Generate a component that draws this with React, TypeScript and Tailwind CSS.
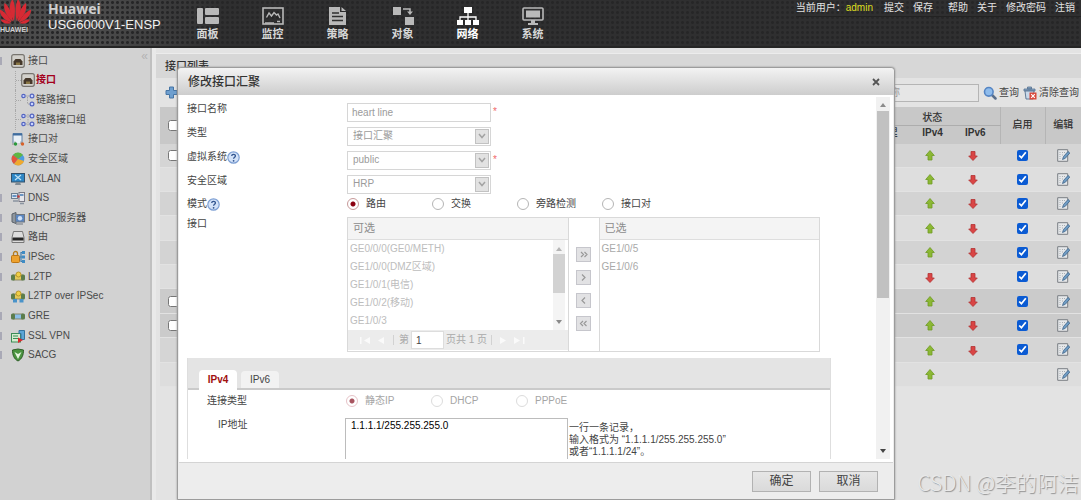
import { useState } from 'react';
import type { ReactNode } from 'react';

type NavItem = { id: string; label: string; icon: ReactNode };
type TreeItem = { label: string; icon: ReactNode; expandable?: boolean };
type PortRow = { bg: string; v4: 'up' | 'down'; v6?: 'up' | 'down'; enable: boolean; selectable: boolean };

// ---------- top menu icons ----------
const navItems: NavItem[] = [
    {
        id: 'panel', label: '面板', icon: (
            <svg viewBox="0 0 22 18" className="w-[22px] h-[18px]" fill="currentColor">
                <rect x="0" y="1" width="6" height="16" rx="1" />
                <rect x="8" y="1" width="14" height="7" rx="1" />
                <rect x="8" y="10" width="14" height="7" rx="1" />
            </svg>
        )
    },
    {
        id: 'monitor', label: '监控', icon: (
            <svg viewBox="0 0 22 18" className="w-[22px] h-[18px]" fill="none" stroke="currentColor">
                <rect x="1" y="1" width="20" height="16" strokeWidth="1.6" />
                <path d="M4.500 10.500 7 6l2.500 3L12 5.500 14.500 8l1.500-1 2 4" strokeWidth="1.400" />
                <path d="M3 16h9M15 14.500h3" strokeWidth="1.400" />
            </svg>
        )
    },
    {
        id: 'policy', label: '策略', icon: (
            <svg viewBox="0 0 22 18" className="w-[22px] h-[18px]">
                <path d="M2 0h11v5h6v13H2z" fill="currentColor" />
                <path d="M14.500 0 19 4h-4.500z" fill="currentColor" />
                <path d="M5 6h7M5 9.500h11M5 13.500h11" stroke="#303030" strokeWidth="1.300" />
            </svg>
        )
    },
    {
        id: 'object', label: '对象', icon: (
            <svg viewBox="0 0 22 18" className="w-[22px] h-[18px]" fill="currentColor">
                <rect x="1" y="0" width="8" height="8" />
                <rect x="13" y="10" width="9" height="8" />
                <path d="M11 2h7v3" fill="none" stroke="currentColor" strokeWidth="1.500" />
                <path d="M15 4.500h6L18 8z" />
            </svg>
        )
    },
    {
        id: 'network', label: '网络', icon: (
            <svg viewBox="0 0 22 18" className="w-[22px] h-[18px]" fill="currentColor">
                <rect x="7" y="0" width="8" height="6" />
                <path d="M11 6v8M3 14v-4h16v4" fill="none" stroke="currentColor" strokeWidth="1.300" />
                <rect x="0" y="13" width="6" height="5" />
                <rect x="8" y="13" width="6" height="5" />
                <rect x="16" y="13" width="6" height="5" />
            </svg>
        )
    },
    {
        id: 'system', label: '系统', icon: (
            <svg viewBox="0 0 22 18" className="w-[22px] h-[18px]" fill="currentColor">
                <rect x="1" y="1" width="20" height="12" rx="1" fill="none" stroke="currentColor" strokeWidth="1.600" />
                <rect x="4" y="3.500" width="14" height="7" />
                <path d="M9 13h4v3h3v2H6v-2h3z" />
            </svg>
        )
    },
];

// ---------- tree icons ----------
const svgCls = 'w-3.5 h-3.5 shrink-0';

const PortIcon = () => (
    <svg viewBox="0 0 14 14" className={svgCls}>
        <rect x="0.700" y="0.700" width="12.600" height="12.600" rx="2" fill="#d2d0cb" stroke="#77746f" strokeWidth="1.200" />
        <path d="M2.500 11V7.500L4.500 5h5l2 2.500V11z" fill="#45382b" />
        <path d="M5 11V8.500h4V11z" fill="#8a7745" />
    </svg>
);

const LinkIcon = ({ group }: { group?: boolean }) => (
    <svg viewBox="0 0 14 14" className={svgCls}>
        <path d={group ? 'M2.500 3h8M2.500 11h8M7 1v12' : 'M2.500 3h4v8h4M6.500 3h4'} stroke="#a5a5a5" strokeDasharray="1.500 1" fill="none" />
        <g fill="#c9d3ff" stroke="#5365c0" strokeWidth="1.200">
            <circle cx="2.500" cy="3" r="1.700" />
            {group && <circle cx="2.500" cy="11" r="1.700" />}
            <circle cx="11" cy="3" r="1.900" />
            <circle cx="11" cy="11" r="1.900" />
        </g>
    </svg>
);

const PairIcon = () => (
    <svg viewBox="0 0 14 14" className={svgCls}>
        <path d="M2 11V1.500h9V11" fill="#e9f0f6" stroke="#5e81a8" />
        <path d="M2 2.500h9" stroke="#3f6c9f" strokeWidth="2" />
        <path d="M4 9.500v2.500H1M10 9.500V12h3" fill="none" stroke="#8a8a8a" />
        <circle cx="4.500" cy="12" r="1.700" fill="#2a9a3c" />
        <circle cx="11.500" cy="12" r="1.700" fill="#d8622b" />
    </svg>
);

const ZoneIcon = () => (
    <svg viewBox="0 0 14 14" className={svgCls}>
        <circle cx="7" cy="7" r="6.300" fill="#4c9be0" />
        <path d="M7 7 2 3A6.300 6.300 0 0 1 12 3z" fill="#5fb645" />
        <path d="M7 7 2 3a6.300 6.300 0 0 0 1 9z" fill="#e2553d" />
        <path d="M7 7 3 12a6.300 6.300 0 0 0 10-3z" fill="#f0a92e" />
    </svg>
);

const VxlanIcon = () => (
    <svg viewBox="0 0 14 14" className={svgCls}>
        <rect x="0.500" y="1.500" width="13" height="8.500" fill="#2e86c4" stroke="#33516b" />
        <path d="m4 3 6 5M10 3 4 8" stroke="#bfe3f7" strokeWidth="1.200" />
        <path d="M5 10h4l1 3H4z" fill="#7f8b94" />
    </svg>
);

const DnsIcon = () => (
    <svg viewBox="0 0 14 14" className={svgCls}>
        <rect x="0.500" y="2.500" width="6" height="5" fill="#dbe6f0" stroke="#6c7e90" />
        <rect x="8" y="1.500" width="5.500" height="9" fill="#e5e5ea" stroke="#7a7a86" />
        <path d="M1.500 5h4M9 4h3.500" stroke="#4179b4" strokeWidth="1.300" />
        <circle cx="7.500" cy="5.500" r="1.200" fill="#c43b3b" />
        <path d="M2 10h5M9 12.500h4" stroke="#8a94a0" strokeWidth="1.400" />
    </svg>
);

const DhcpIcon = () => (
    <svg viewBox="0 0 14 14" className={svgCls}>
        <path d="M1 3l4-1.500v11L1 11z" fill="#8e969e" stroke="#5b636b" />
        <rect x="4.500" y="3.500" width="9" height="7.500" fill="#5b86c0" stroke="#6f7780" />
        <circle cx="9" cy="7.200" r="2.200" fill="#cfe1f7" />
        <path d="M5 13h7" stroke="#6f7780" />
    </svg>
);

const RouteIcon = () => (
    <svg viewBox="0 0 14 14" className={svgCls}>
        <path d="M2.500 1.500h9l1.500 6V12.500H1v-5z" fill="#dcdcdc" stroke="#777" />
        <rect x="1.500" y="7.500" width="11" height="3" fill="#262626" />
    </svg>
);

const IpsecIcon = () => (
    <svg viewBox="0 0 14 14" className={svgCls}>
        <path d="M2.500 6V3.500a2 2 0 0 1 4 0V6" fill="none" stroke="#b77d1d" strokeWidth="1.300" />
        <rect x="0.500" y="5.500" width="8" height="7" rx="1" fill="#eda12d" stroke="#bb7515" />
        <path d="M13 2.500h-3v9h3M8.500 7H13" fill="none" stroke="#3f7fb0" strokeWidth="1.200" />
        <path d="M11 1h3v3h-3zM11 5.500h3v3h-3zM11 10h3v3h-3z" fill="#3f8cc4" />
    </svg>
);

const TunnelIcon = ({ mid, base }: { mid: string; base?: boolean }) => (
    <svg viewBox="0 0 14 14" className={svgCls}>
        <rect x="2.500" y="5" width="9" height="5" fill={mid} stroke="#7d7a52" strokeWidth="0.800" />
        <rect x="0" y="4.500" width="4" height="6" rx="1.500" fill="#5c7d4c" />
        <rect x="10" y="4.500" width="4" height="6" rx="1.500" fill="#5c7d4c" />
        {mid !== '#8dbfe8' && <circle cx="7.500" cy="4.500" r="2.500" fill="#f0cf45" stroke="#b8962a" />}
        {base && <path d="M2 10h4v3.500H2zM8.500 10h4v3.500h-4z" fill="#4a93c9" />}
    </svg>
);

const SslIcon = () => (
    <svg viewBox="0 0 14 14" className={svgCls}>
        <rect x="0.500" y="4.500" width="9" height="8.500" fill="#d5ecd0" stroke="#3b8d56" />
        <path d="M2 7h5M2 9.500h5" stroke="#3b8d56" strokeWidth="1.200" />
        <path d="M8 1.500h5.500v9H10V4.500H8z" fill="#5ba6d6" stroke="#34749f" />
        <path d="m7 8.500 5 2.500-5 3z" fill="#d8282c" />
    </svg>
);

const SacgIcon = () => (
    <svg viewBox="0 0 14 14" className={svgCls}>
        <path d="M1.500 2 7 1l5.500 1c0 5-1.500 9-5.500 11C3 11 1.500 7 1.500 2z" fill="#4b9440" stroke="#2f5f28" />
        <path d="m3.500 4 3.500 7 3.500-7-3.500 2z" fill="#e6f5df" />
    </svg>
);

const childItems: TreeItem[] = [
    { label: '接口', icon: <PortIcon /> },
    { label: '链路接口', icon: <LinkIcon /> },
    { label: '链路接口组', icon: <LinkIcon group /> },
];

const treeItems: TreeItem[] = [
    { label: '接口对', icon: <PairIcon /> },
    { label: '安全区域', icon: <ZoneIcon /> },
    { label: 'VXLAN', icon: <VxlanIcon /> },
    { label: 'DNS', icon: <DnsIcon />, expandable: true },
    { label: 'DHCP服务器', icon: <DhcpIcon />, expandable: true },
    { label: '路由', icon: <RouteIcon />, expandable: true },
    { label: 'IPSec', icon: <IpsecIcon />, expandable: true },
    { label: 'L2TP', icon: <TunnelIcon mid="#e3c95a" />, expandable: true },
    { label: 'L2TP over IPSec', icon: <TunnelIcon mid="#e3c95a" base /> },
    { label: 'GRE', icon: <TunnelIcon mid="#8dbfe8" />, expandable: true },
    { label: 'SSL VPN', icon: <SslIcon />, expandable: true },
    { label: 'SACG', icon: <SacgIcon />, expandable: true },
];

const portRows: PortRow[] = [
    { bg: 'bg-[#d5d5d5]', v4: 'up', v6: 'down', enable: true, selectable: true },
    { bg: 'bg-[#dedede]', v4: 'up', v6: 'down', enable: true, selectable: false },
    { bg: 'bg-[#d3d3d3]', v4: 'up', v6: 'down', enable: true, selectable: false },
    { bg: 'bg-[#dddddd]', v4: 'up', v6: 'down', enable: true, selectable: false },
    { bg: 'bg-[#d3d3d3]', v4: 'up', v6: 'down', enable: true, selectable: false },
    { bg: 'bg-[#dddddd]', v4: 'down', v6: 'down', enable: true, selectable: false },
    { bg: 'bg-[#cbcbcb]', v4: 'up', v6: 'down', enable: true, selectable: true },
    { bg: 'bg-[#cbcbcb]', v4: 'up', v6: 'down', enable: true, selectable: true },
    { bg: 'bg-[#d5d5d5]', v4: 'up', v6: 'down', enable: true, selectable: false },
    { bg: 'bg-[#dddddd]', v4: 'up', enable: false, selectable: false },
];

const freePorts = ['GE0/0/0(GE0/METH)', 'GE1/0/0(DMZ区域)', 'GE1/0/1(电信)', 'GE1/0/2(移动)', 'GE1/0/3'];
const usedPorts = ['GE1/0/5', 'GE1/0/6'];

// ---------- small shared pieces ----------
function Arrow({ dir }: { dir: 'up' | 'down' }) {
    return (
        <svg viewBox="0 0 10 11" className="inline-block w-2.5 h-[11px] align-middle">
            {dir === 'up'
                ? <path d="M5 .5 9.300 5.500H7V10H3V5.500H.7z" fill="#8cb834" stroke="#6f9a25" strokeWidth="0.800" />
                : <path d="M5 10.500.7 6H3V1.500h4V6h2.300z" fill="#d94545" stroke="#b23333" strokeWidth="0.800" />}
        </svg>
    );
}

const EditIcon = () => (
    <svg viewBox="0 0 13 13" className="inline-block w-[13px] h-[13px] align-middle">
        <path d="M.7.7h10v11.600H.7z" fill="#e6e8ea" stroke="#7b7f84" />
        <path d="M3 3v7M5 3.500h4M5 6h2" stroke="#a9aeb3" strokeDasharray="1 1" />
        <path d="m5.500 10.500 1-3L11 2.500l1.800 1.500-4.500 5.300z" fill="#6f9cc4" stroke="#41668a" strokeWidth="0.800" />
    </svg>
);

const HelpIcon = () => (
    <svg viewBox="0 0 13 13" className="w-[13px] h-[13px]">
        <circle cx="6.500" cy="6.500" r="5.700" fill="#d3e2f8" stroke="#7d9fd3" strokeWidth="1.200" />
        <path d="M4.700 5c.1-2.300 3.800-2.100 3.700 0 0 1.300-1.800 1.200-1.800 2.800" fill="none" stroke="#31548f" strokeWidth="1.300" />
        <circle cx="6.600" cy="9.800" r="0.900" fill="#31548f" />
    </svg>
);

const Triangle = ({ down, color }: { down?: boolean; color: string }) => (
    <svg viewBox="0 0 6 4" className="w-1.5 h-1"><path d={down ? 'M0 0h6L3 4z' : 'M0 4h6L3 0z'} fill={color} /></svg>
);

function Radio({ name, label, checked, disabled }: { name: string; label: string; checked?: boolean; disabled?: boolean }) {
    return (
        <label className={`flex w-[85px] items-center gap-[7px] ${disabled ? 'text-[#a5a5a5]' : ''}`}>
            <input
                type="radio"
                name={name}
                defaultChecked={checked}
                disabled={disabled}
                className="m-0 h-3 w-3 appearance-none rounded-full border border-[#b5b5b5] bg-white checked:border-[#c79a9a] checked:bg-[radial-gradient(circle,#8b0010_0_2px,white_3px)] disabled:border-[#dcdcdc] disabled:checked:border-[#e6c3c8] disabled:checked:bg-[radial-gradient(circle,#a85560_0_2px,white_3px)]"
            />
            {label}
        </label>
    );
}

function SelectRow({ id, label, value, help, required }: { id: string; label: string; value: string; help?: boolean; required?: boolean }) {
    return (
        <div className="flex h-6 items-center">
            <div className="flex w-40 items-center self-start">
                <label htmlFor={id} className="leading-[18px]">{label}</label>
                {help && <HelpIcon />}
            </div>
            <div className="relative w-36">
                <select id={id} disabled className="h-[19px] w-full appearance-none border border-[#d6d6d6] bg-white pl-[5px] leading-4 text-[#9b9b9b] opacity-100">
                    <option>{value}</option>
                </select>
                <span className="pointer-events-none absolute right-0.5 top-0.5 flex h-[15px] w-3.5 items-center justify-center border border-[#c2c2c2] bg-[#e2e2e2]">
                    <svg viewBox="0 0 8 6" className="w-2 h-1.5"><path d="m1 1 3 3.500L7 1" fill="none" stroke="#a3a3a3" strokeWidth="1.500" /></svg>
                </span>
            </div>
            {required && <span className="pl-0.5 text-[#f06a6a]">*</span>}
        </div>
    );
}

function Header() {
    return (
        <header className="flex h-12 shrink-0 overflow-hidden border-b-2 border-[#252525] bg-[#2f2f30] bg-[radial-gradient(circle,#262627_1px,transparent_2px),linear-gradient(90deg,#484848_0,#505050_80px,#2f2f30_220px)] bg-size-[5px_5px,100%_100%]">
            <div className="w-12 shrink-0">
                <svg viewBox="0 0 34 25" className="block h-[25px] w-[34px]">
                    <g fill="#d62a34">
                        <path d="M14 21C9.500 14 8 5 12.500-1c2.800 5 3 13 1.500 22z" />
                        <path d="M16.500 21C15 13 15.200 4 18-1c4.500 6 3 15-1.500 22z" />
                        <path d="M12.800 21.500C7 17 3 10 4.500 3c4.500 3 8 11 8.300 18.500z" />
                        <path d="M17.800 21.500C18 14 21.500 6 26 3c1.500 7-2.500 14-8.200 18.500z" />
                        <path d="M11.500 22.200C5.500 21-.5 16-.2 9.500c4.700 2 9.200 7 11.700 12.700z" />
                        <path d="M19 22.200C21.500 16.500 26 11.500 31 9.500 31.300 16 25 21 19 22.200z" />
                        <path d="M11 23.200c-4 1.200-8.500.3-10.500-3.700 3.500-.2 7.500 1 10.500 3.700z" />
                        <path d="M19.500 23.200c4 1.200 8.500.3 10.500-3.700-3.500-.2-7.500 1-10.500 3.700z" />
                    </g>
                </svg>
                <p className="text-[7px] leading-[10px] font-bold text-[#d0d0d0]">HUAWEI</p>
            </div>
            <div className="w-[136px] shrink-0 whitespace-nowrap">
                <p className="font-['Noto_Sans'] text-[14px] leading-[17px] font-bold text-[#cfcfcf]">Huawei</p>
                <p className="text-[13px] leading-4 text-[#f0f0f0]">USG6000V1-ENSP</p>
            </div>
            <nav className="flex">
                {navItems.map((item) => (
                    <a key={item.id} href={`#${item.id}`} className={`flex w-[65px] flex-col items-center pt-[7px] pr-[18px] text-[11px] leading-[19px] font-bold ${item.id === 'network' ? 'text-white' : 'text-[#b9b9b9]'}`}>
                        {item.icon}
                        <span className={item.id === 'network' ? 'text-white' : 'text-[#d6d6d6]'}>{item.label}</span>
                    </a>
                ))}
            </nav>
            <div className="ml-auto flex h-[17px] items-center gap-[9px] self-start border-b border-[#222] pr-1.5 leading-[14px] whitespace-nowrap text-[#e2e2e2]">
                <span className="pr-0.5">当前用户：<span className="text-[#dede20]">admin</span></span>
                <a href="#commit">提交</a>
                <a href="#save">保存</a>
                <a href="#help" className="pl-1.5">帮助</a>
                <a href="#about">关于</a>
                <a href="#password">修改密码</a>
                <a href="#logout">注销</a>
            </div>
        </header>
    );
}

function Sidebar() {
    return (
        <aside className="flex w-[152px] shrink-0 items-start border-r-2 border-[#c0c0c0] bg-[#d2d2d2] text-[#4a4a4a]">
            {/* rows share the height so the whole tree keeps one rhythm */}
            <ul className="grid h-[317px] flex-1 auto-rows-fr pt-[3px] whitespace-nowrap">
                <li className="flex items-center">
                    <span className="mr-[9px] h-2 w-0.5 bg-[#a9a9b6]" />
                    <PortIcon />
                    <a href="#interface" className="pl-[3px]">接口</a>
                </li>
                {childItems.map((item, i) => (
                    <li key={item.label} className="ml-[15px] flex items-center border-l border-dotted border-[#a8a8a8]">
                        <span className="w-[5px] border-t border-dotted border-[#a8a8a8]" />
                        {item.icon}
                        <a href={`#tree-${i}`} className={i === 0 ? 'pl-px font-bold text-[#a3001c]' : 'pl-px'}>{item.label}</a>
                    </li>
                ))}
                {treeItems.map((item) => (
                    <li key={item.label} className="flex items-center">
                        <span className={`mr-[9px] h-2 w-0.5 ${item.expandable ? 'bg-[#a9a9b6]' : ''}`} />
                        {item.icon}
                        <a href={`#${item.label}`} className="pl-[3px]">{item.label}</a>
                    </li>
                ))}
            </ul>
            <button className="pr-0.5 text-[12px] leading-4 text-[#b3b3b3]" aria-label="collapse">«</button>
        </aside>
    );
}

function PortList() {
    return (
        <main className="flex-1 border-l-4 border-[#e9e9e9] bg-[#e3e3e3] pt-[5px]">
            <section className="border-t border-[#ececec]">
                <h2 className="bg-[#d7d7d7] pl-[9px] text-[11px] leading-6 font-medium text-[#333]">接口列表</h2>
                <div className="flex h-[29px] items-center gap-1 pr-0.5 pl-[9px] text-[#444]">
                    <button aria-label="add">
                        <svg viewBox="0 0 13 13" className="h-[13px] w-[13px]"><path d="M4.500 1h4v3.500H12v4H8.500V12h-4V8.500H1v-4h3.500z" fill="#6e9fcf" stroke="#4675a5" /></svg>
                    </button>
                    <input aria-label="search" placeholder="请输入接口名称" className="ml-auto h-[18px] w-[151px] border border-[#b5b5b5] bg-[#e6e6e6] pl-px placeholder:text-[#999]" />
                    <button className="flex items-center gap-0.5">
                        <svg viewBox="0 0 14 14" className="h-3.5 w-3.5">
                            <path d="m9 9 3.500 3.500" stroke="#5b6f8a" strokeWidth="2.500" strokeLinecap="round" />
                            <circle cx="5.800" cy="5.800" r="4.300" fill="#8fbcec" stroke="#5585c4" strokeWidth="1.600" />
                        </svg>
                        查询
                    </button>
                    <button className="flex items-center gap-0.5">
                        <svg viewBox="0 0 14 14" className="h-3.5 w-3.5">
                            <path d="M1 3h11v2H1zM4.500 1h4v2h-4z" fill="#8ba9c9" stroke="#56718f" strokeWidth="0.800" />
                            <path d="M2 5h9l-1 8H3z" fill="#c9d9ea" stroke="#56718f" strokeWidth="0.900" />
                            <rect x="6.500" y="6.500" width="7" height="7" fill="#d9483b" />
                            <path d="m8.200 8.200 3.600 3.600m0-3.600-3.600 3.600" stroke="#fff" strokeWidth="1.200" />
                        </svg>
                        清除查询
                    </button>
                </div>
                <div className="pl-1">
                    <table className="h-[280px] w-full table-fixed border-collapse text-center text-[#333]">
                        <colgroup>
                            <col className="w-6" />
                            <col />
                            <col className="w-[45px]" />
                            <col className="w-[45px]" />
                            <col className="w-[45px]" />
                            <col className="w-[45px]" />
                            <col className="w-9" />
                        </colgroup>
                        <thead className="bg-[#c8c8c8]">
                            <tr className="h-[18px]">
                                <th rowSpan={2}><input type="checkbox" aria-label="select all" className="ml-2 block h-[11px] w-[11px]" /></th>
                                <th rowSpan={2}></th>
                                <th colSpan={3} className="border-b border-[#adadad] pt-1 font-medium">状态</th>
                                <th rowSpan={2} className="border-x border-[#b5b5b5] font-medium">启用</th>
                                <th rowSpan={2} className="font-medium">编辑</th>
                            </tr>
                            <tr className="h-[18px] align-top leading-[14px]">
                                <th className="font-medium">物理</th>
                                <th>IPv4</th>
                                <th className="pr-1">IPv6</th>
                            </tr>
                        </thead>
                        <tbody>
                            {portRows.map((row, i) => (
                                <tr key={i} className={`border-b border-[#e2e2e2] ${row.bg}`}>
                                    <td>{row.selectable && <input type="checkbox" aria-label={`row ${i + 1}`} className="ml-2 block h-[11px] w-[11px]" />}</td>
                                    <td></td>
                                    <td></td>
                                    <td className="pr-1"><Arrow dir={row.v4} /></td>
                                    <td className="pr-2">{row.v6 && <Arrow dir={row.v6} />}</td>
                                    <td>{row.enable && <input type="checkbox" defaultChecked aria-label={`enable ${i + 1}`} className="mx-auto block h-[11px] w-[11px] accent-[#0b5bd3]" />}</td>
                                    <td><button aria-label={`edit ${i + 1}`} className="block w-full leading-3"><EditIcon /></button></td>
                                </tr>
                            ))}
                        </tbody>
                    </table>
                </div>
            </section>
        </main>
    );
}

function PortPicker() {
    return (
        <div className="flex h-[135px] flex-1 border border-[#d9d9d9] text-[#a9a9a9]">
            <div className="flex flex-1 flex-col border-r border-[#d9d9d9]">
                <h3 className="border-b border-[#dedede] bg-[#f4f4f4] pl-[5px] text-[11px] leading-[21px] text-[#8c8c8c]">可选</h3>
                <div className="flex h-[90px]">
                    <ul className="flex-1 pl-0.5 leading-[18px] text-[#bdbdbd]">
                        {freePorts.map((p) => <li key={p}>{p}</li>)}
                    </ul>
                    <div className="mr-[3px] flex w-3 flex-col items-center bg-[#f4f4f4] pt-[7px] pb-1.5">
                        <Triangle color="#b5b5b5" />
                        <span className="mt-[3px] h-[39px] w-3 bg-[#d2d2d2]" />
                        <span className="mt-auto"><Triangle down color="#8a8a8a" /></span>
                    </div>
                </div>
                {/* pager */}
                <div className="flex h-5 items-center bg-[#ececec] pl-3">
                    <button aria-label="first" className="w-4"><svg viewBox="0 0 11 7" className="h-[7px] w-[11px]"><path d="M0 0h1.500v7H0zM10 0v7L4 3.500z" fill="#fafafa" /></svg></button>
                    <button aria-label="previous" className="w-4 pl-0.5"><svg viewBox="0 0 7 7" className="h-[7px] w-[7px]"><path d="M6 0v7L0 3.500z" fill="#fafafa" /></svg></button>
                    <span className="mr-[5px] ml-px h-2.5 border-l border-[#d2d2d2]" />
                    <label htmlFor="page">第</label>
                    <input id="page" defaultValue="1" className="mx-0.5 h-[18px] w-[33px] border border-[#ddd] bg-white pl-1 text-[#444]" />
                    <span>页共 1 页</span>
                    <span className="mr-2 ml-1 h-2.5 border-l border-[#d2d2d2]" />
                    <button aria-label="next" className="w-3.5"><svg viewBox="0 0 7 7" className="h-[7px] w-[7px]"><path d="M0 0v7l6-3.500z" fill="#fafafa" /></svg></button>
                    <button aria-label="last" className="w-4"><svg viewBox="0 0 11 7" className="h-[7px] w-[11px]"><path d="M9 0h1.500v7H9zM0 0v7l6-3.500z" fill="#fafafa" /></svg></button>
                </div>
            </div>
            <div className="flex w-[30px] flex-col items-center gap-2 pt-[29px]">
                {['M2 2l2.500 2.500L2 7M5.500 2 8 4.500 5.500 7', 'M3 1.500l3 3-3 3', 'M6 1.500l-3 3 3 3', 'M4 2 1.500 4.500 4 7M7.500 2 5 4.500 7.500 7'].map((d) => (
                    <button key={d} aria-label="move" className="flex h-[15px] w-[15px] items-center justify-center border border-[#c6c6cc] bg-[#e2e2e4]">
                        <svg viewBox="0 0 9 9" className="h-[9px] w-[9px]"><path d={d} fill="none" stroke="#999" strokeWidth="1.200" /></svg>
                    </button>
                ))}
            </div>
            <div className="flex-1 border-l border-[#d9d9d9]">
                <h3 className="border-b border-[#dedede] bg-[#f4f4f4] pl-[5px] text-[11px] leading-[21px] text-[#8c8c8c]">已选</h3>
                <ul className="pl-0.5 leading-[18px]">
                    {usedPorts.map((p) => <li key={p}>{p}</li>)}
                </ul>
            </div>
        </div>
    );
}

function EditDialog() {
    const [tab, setTab] = useState('IPv4');

    return (
        <div role="dialog" aria-labelledby="dialog-title" className="absolute top-[67px] right-[186px] bottom-0 left-[177px] flex flex-col rounded-t border border-[#9c9c9c] bg-[#ededed] text-[#444] shadow-[0_0_2px_#8a8a8a]">
            <div className="flex h-[27px] shrink-0 items-center justify-between rounded-t bg-linear-to-b from-[#f3f3f3] to-[#cdcdcd] pr-3.5 pl-2.5">
                <h1 id="dialog-title" className="text-[12px] font-medium text-[#333]">修改接口汇聚</h1>
                <button aria-label="close">
                    <svg viewBox="0 0 8 8" className="h-2 w-2"><path d="m1 1 6 6m0-6L1 7" stroke="#555" strokeWidth="1.800" /></svg>
                </button>
            </div>
            <div className="mx-px flex min-h-0 flex-1 border-b border-[#d4d4d4] bg-white pr-[3px] pb-[3px]">
                <div className="flex-1 overflow-hidden pt-[5px] pr-[45px] pl-2">
                    <div className="pr-[11px]">
                        <div className="flex h-6 items-center">
                            <label htmlFor="port-name" className="w-40 self-start leading-[18px]">接口名称</label>
                            <input id="port-name" disabled defaultValue="heart line" className="h-[19px] w-36 border border-[#d6d6d6] bg-white pl-1 text-[#9b9b9b]" />
                            <span className="pl-0.5 text-[#f06a6a]">*</span>
                        </div>
                        <SelectRow id="port-type" label="类型" value="接口汇聚" />
                        <SelectRow id="port-vsys" label="虚拟系统" value="public" help required />
                        <SelectRow id="port-zone" label="安全区域" value="HRP" />
                        <div className="flex h-4 items-center">
                            <div className="flex w-40 items-center">模式<HelpIcon /></div>
                            <Radio name="mode" label="路由" checked />
                            <Radio name="mode" label="交换" />
                            <Radio name="mode" label="旁路检测" />
                            <Radio name="mode" label="接口对" />
                        </div>
                        <div className="mt-[5px] flex">
                            <span className="w-40 leading-[14px]">接口</span>
                            <PortPicker />
                        </div>
                    </div>
                    <div className="mt-1.5 border-x border-[#dedede]">
                        <div role="tablist" className="flex h-8 items-end gap-1 border-b-2 border-[#cacaca] bg-[#e4e4e4] pl-[11px]">
                            {['IPv4', 'IPv6'].map((t) => (
                                <button
                                    key={t}
                                    role="tab"
                                    aria-selected={tab === t}
                                    onClick={() => setTab(t)}
                                    className={`w-[38px] rounded-t ${tab === t ? '-mb-0.5 h-5 bg-white font-bold text-[#a01010]' : 'h-[17px] bg-[#f2f2f2]'}`}
                                >
                                    {t}
                                </button>
                            ))}
                        </div>
                        <div className="flex items-center pt-1 pl-[19px]">
                            <span className="w-[139px]">连接类型</span>
                            <Radio name="conn" label="静态IP" checked disabled />
                            <Radio name="conn" label="DHCP" disabled />
                            <Radio name="conn" label="PPPoE" disabled />
                        </div>
                        <div className="mt-2.5 flex pl-[30px]">
                            <label htmlFor="ip-addr" className="w-[127px] leading-[14px]">IP地址</label>
                            <textarea id="ip-addr" defaultValue="1.1.1.1/255.255.255.0" className="h-16 w-[223px] resize-none overflow-hidden border border-[#bcbcbc] pl-[5px] leading-[14px] text-black" />
                            <p className="pt-1 pl-px leading-3">
                                一行一条记录，<br />
                                输入格式为 “1.1.1.1/255.255.255.0”<br />
                                或者“1.1.1.1/24”。
                            </p>
                        </div>
                    </div>
                </div>
                <div className="mt-0.5 flex w-3.5 shrink-0 flex-col items-center bg-[#f1f1f1] pt-1.5 pb-1.5">
                    <Triangle color="#8c8c8c" />
                    <span className="mt-1 h-[187px] w-3 bg-[#c1c1c1]" />
                    <span className="mt-auto"><Triangle down color="#444" /></span>
                </div>
            </div>
            <div className="flex h-9 shrink-0 items-center justify-end gap-2 pr-4 text-[12px]">
                <button className="h-[21px] w-[59px] border border-[#b2b2b2] bg-linear-to-b from-[#e6e6e6] to-[#dadada]">确定</button>
                <button className="h-[21px] w-[59px] border border-[#b2b2b2] bg-linear-to-b from-[#e6e6e6] to-[#dadada]">取消</button>
            </div>
        </div>
    );
}

export default function App() {
    return (
        <div className="relative flex h-screen flex-col overflow-hidden bg-[#e3e3e3] font-['Liberation_Sans','Noto_Sans_CJK_SC',sans-serif] text-[10px] leading-[14px]">
            <Header />
            <div className="flex min-h-0 flex-1">
                <Sidebar />
                <PortList />
            </div>
            <EditDialog />
            <p className="pointer-events-none absolute right-0.5 bottom-1 font-['Noto_Sans_CJK_SC',sans-serif] text-[21px] leading-7 font-light text-[#e9e9e9] [text-shadow:1px_1px_1px_#909090]">CSDN @李的阿洁</p>
        </div>
    );
}
